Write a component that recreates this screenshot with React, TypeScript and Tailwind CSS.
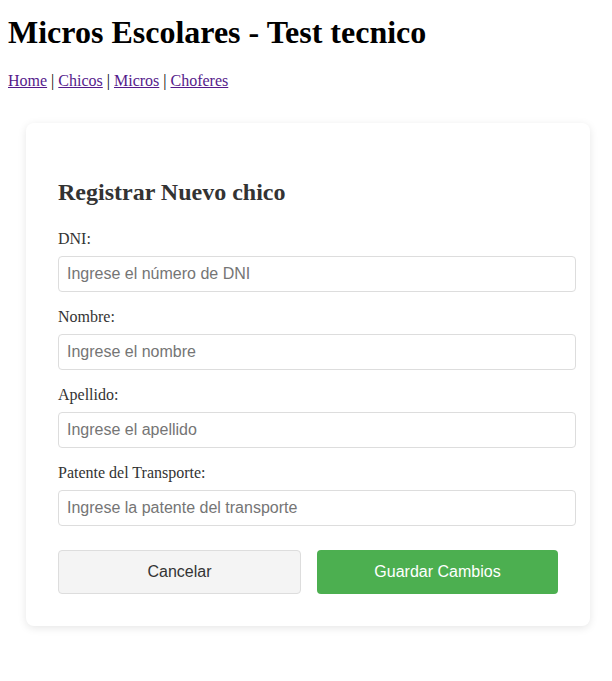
import React from 'react';

const serif = { fontFamily: '"Liberation Serif", "Times New Roman", serif' };
const sans = { fontFamily: '"Liberation Sans", Arial, sans-serif' };

const fields = [
  { id: 'dni', label: 'DNI:', placeholder: 'Ingrese el número de DNI' },
  { id: 'nombre', label: 'Nombre:', placeholder: 'Ingrese el nombre' },
  { id: 'apellido', label: 'Apellido:', placeholder: 'Ingrese el apellido' },
  { id: 'patente', label: 'Patente del Transporte:', placeholder: 'Ingrese la patente del transporte' },
];

const App: React.FC = () => {
  return (
    <div className="min-h-screen bg-white px-2 pt-px text-black" style={serif}>
      <h1 className="text-[32px] font-bold leading-[37px] mt-[13px] mb-[21px]">Micros Escolares - Test tecnico</h1>
      <p className="text-base leading-[18px]">
        <a href="#" className="underline text-[#551a8b]">Home</a> |{' '}
        <a href="#" className="underline text-[#551a8b]">Chicos</a> |{' '}
        <a href="#" className="underline text-[#551a8b]">Micros</a> |{' '}
        <a href="#" className="underline text-[#551a8b]">Choferes</a>
      </p>

      <div className="ml-[18px] mt-[33px] w-[564px] rounded-lg bg-white p-8 shadow-[0_2px_8px_rgba(0,0,0,0.1)]">
        <h2 className="text-2xl font-bold leading-[28px] text-[#333] mt-[23px] mb-[24px]">Registrar Nuevo chico</h2>

        <form onSubmit={(e) => e.preventDefault()}>
          {fields.map((f) => (
            <div key={f.id} className="mb-4">
              <label htmlFor={f.id} className="block text-base leading-[18px] text-[#333] mb-2">
                {f.label}
              </label>
              <input
                id={f.id}
                type="text"
                placeholder={f.placeholder}
                className="box-content w-[500px] h-[18px] rounded border border-[#ddd] px-2 py-2 text-base text-[#333] placeholder:text-[#757575] outline-none"
                style={sans}
              />
            </div>
          ))}

          <div className="mt-[24px] flex gap-4" style={sans}>
            <button
              type="button"
              className="flex-1 h-[44px] rounded border border-[#ddd] bg-[#f4f4f4] text-base text-[#333]"
            >
              Cancelar
            </button>
            <button
              type="submit"
              className="flex-1 h-[44px] rounded bg-[#4caf50] text-base text-white"
            >
              Guardar Cambios
            </button>
          </div>
        </form>
      </div>
    </div>
  );
};

export default App;
